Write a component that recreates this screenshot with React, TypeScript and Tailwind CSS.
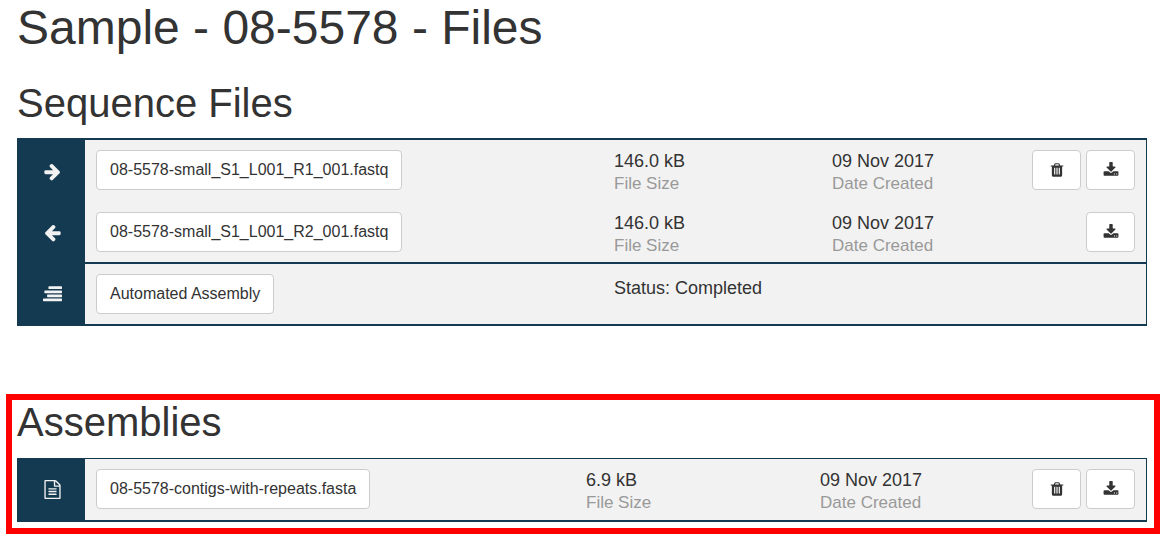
import type { ReactNode } from "react";

const icons = {
  forward:
    "M1600 960q0 54-37 91l-651 651q-39 37-91 37-51 0-90-37l-75-75q-38-38-38-91t38-91l293-293h-704q-52 0-84.5-37.5t-32.5-90.5v-128q0-53 32.5-90.5t84.5-37.5h704l-293-294q-38-36-38-90t38-90l75-75q38-38 90-38 53 0 91 38l651 651q37 35 37 90z",
  reverse:
    "M1664 896v128q0 53-32.5 90.5t-84.5 37.5h-704l293 294q38 36 38 90t-38 90l-75 76q-37 37-90 37-52 0-91-37l-651-652q-37-37-37-90 0-52 37-91l651-650q38-38 91-38 52 0 90 38l75 74q38 38 38 91t-38 91l-293 293h704q52 0 84.5 37.5t32.5 90.5z",
  lines:
    "M1792 1344v128q0 26-19 45t-45 19h-1664q-26 0-45-19t-19-45v-128q0-26 19-45t45-19h1664q26 0 45 19t19 45zm0-384v128q0 26-19 45t-45 19h-1280q-26 0-45-19t-19-45v-128q0-26 19-45t45-19h1280q26 0 45 19t19 45zm0-384v128q0 26-19 45t-45 19h-1536q-26 0-45-19t-19-45v-128q0-26 19-45t45-19h1536q26 0 45 19t19 45zm0-384v128q0 26-19 45t-45 19h-1152q-26 0-45-19t-19-45v-128q0-26 19-45t45-19h1152q26 0 45 19t19 45z",
  document:
    "M1596 380q28 28 48 76t20 88v1152q0 40-28 68t-68 28h-1344q-40 0-68-28t-28-68v-1600q0-40 28-68t68-28h896q40 0 88 20t76 48zm-444-244v376h376q-10-29-22-41l-313-313q-12-12-41-22zm384 1528v-1024h-416q-40 0-68-28t-28-68v-416h-768v1536h1280zm-1024-864q0-14 9-23t23-9h704q14 0 23 9t9 23v64q0 14-9 23t-23 9h-704q-14 0-23-9t-9-23v-64zm736 224q14 0 23 9t9 23v64q0 14-9 23t-23 9h-704q-14 0-23-9t-9-23v-64q0-14 9-23t23-9h704zm0 256q14 0 23 9t9 23v64q0 14-9 23t-23 9h-704q-14 0-23-9t-9-23v-64q0-14 9-23t23-9h704z",
  trash:
    "M704 1376v-704q0-14-9-23t-23-9h-64q-14 0-23 9t-9 23v704q0 14 9 23t23 9h64q14 0 23-9t9-23zm256 0v-704q0-14-9-23t-23-9h-64q-14 0-23 9t-9 23v704q0 14 9 23t23 9h64q14 0 23-9t9-23zm256 0v-704q0-14-9-23t-23-9h-64q-14 0-23 9t-9 23v704q0 14 9 23t23 9h64q14 0 23-9t9-23zm-544-992h448l-48-117q-7-9-17-11h-317q-10 2-17 11zm928 32v64q0 14-9 23t-23 9h-96v948q0 83-47 143.5t-113 60.5h-832q-66 0-113-58.5t-47-141.5v-952h-96q-14 0-23-9t-9-23v-64q0-14 9-23t23-9h309l70-167q15-37 54-63t79-26h320q40 0 79 26t54 63l70 167h309q14 0 23 9t9 23z",
  download:
    "M1344 1344q0-26-19-45t-45-19-45 19-19 45 19 45 45 19 45-19 19-45zm256 0q0-26-19-45t-45-19-45 19-19 45 19 45 45 19 45-19 19-45zm128-224v320q0 40-28 68t-68 28h-1472q-40 0-68-28t-28-68v-320q0-40 28-68t68-28h465l135 136q58 56 136 56t136-56l136-136h464q40 0 68 28t28 68zm-325-569q17 41-14 70l-448 448q-18 19-45 19t-45-19l-448-448q-31-29-14-70 17-39 59-39h256v-448q0-26 19-45t45-19h256q26 0 45 19t19 45v448h256q42 0 59 39z",
};

type IconName = keyof typeof icons;

function Icon({ name, className }: { name: IconName; className: string }) {
  return (
    <svg viewBox="0 0 1792 1792" fill="currentColor" aria-hidden="true" className={className}>
      <path d={icons[name]} />
    </svg>
  );
}

function Button({ children, label, square }: { children: ReactNode; label?: string; square?: boolean }) {
  return (
    <button
      type="button"
      aria-label={label}
      className={
        "inline-flex h-10 items-center justify-center rounded border border-[#cccccc] bg-white text-base text-[#333333] hover:bg-gray-100 " +
        (square ? "w-[49px]" : "px-[13px] whitespace-nowrap")
      }
    >
      {children}
    </button>
  );
}

function Detail({ value, label }: { value: string; label: string }) {
  return (
    <div className="whitespace-nowrap">
      <div className="text-lg leading-[22px] text-[#333333]">{value}</div>
      <div className="text-[17px] leading-6 text-[#999999]">{label}</div>
    </div>
  );
}

function Side({ icon }: { icon: IconName }) {
  return (
    <td className="bg-[#143a52] pl-[3px] align-middle text-[#f2f2f2]">
      <Icon name={icon} className="mx-auto size-[19px]" />
    </td>
  );
}

interface FileRow {
  icon: IconName;
  name: string;
  size: string;
  date: string;
  removable: boolean;
  height: string;
}

function FileTableRow({ row }: { row: FileRow }) {
  return (
    <tr className={row.height}>
      <Side icon={row.icon} />
      <td className="pt-[10px] pl-[11px] align-top">
        <Button>{row.name}</Button>
      </td>
      <td className="pt-[10px] pl-[11px] align-top">
        <Detail value={row.size} label="File Size" />
      </td>
      <td className="pt-[10px] pl-[11px] align-top">
        <Detail value={row.date} label="Date Created" />
      </td>
      <td className="pt-[10px] pr-[11px] align-top">
        <div className="flex justify-end gap-[5px]">
          {row.removable && (
            <Button square label={"Delete " + row.name}>
              <Icon name="trash" className="size-4" />
            </Button>
          )}
          <Button square label={"Download " + row.name}>
            <Icon name="download" className="size-4" />
          </Button>
        </div>
      </td>
    </tr>
  );
}

const sequenceFiles: FileRow[] = [
  { icon: "forward", name: "08-5578-small_S1_L001_R1_001.fastq", size: "146.0 kB", date: "09 Nov 2017", removable: true, height: "h-[62px]" },
  { icon: "reverse", name: "08-5578-small_S1_L001_R2_001.fastq", size: "146.0 kB", date: "09 Nov 2017", removable: false, height: "h-[60px]" },
];

const assembly: FileRow = {
  icon: "document",
  name: "08-5578-contigs-with-repeats.fasta",
  size: "6.9 kB",
  date: "09 Nov 2017",
  removable: true,
  height: "h-[61px]",
};

export default function App() {
  return (
    <main className="bg-white font-['Liberation_Sans',Arial,sans-serif] text-[#333333]">
      <div className="pr-5 pl-[17px]">
        <h1 className="text-5xl leading-[56px]">Sample - 08-5578 - Files</h1>
        <h2 className="mt-[25px] text-[40px] leading-[44px]">Sequence Files</h2>
        <div className="mt-[13px] border-y-2 border-r border-[#143a52] bg-[#f2f2f2]">
          <table className="w-full table-fixed border-collapse">
            <colgroup>
              <col className="w-[68px]" />
              <col />
              <col className="w-[218px]" />
              <col className="w-[200px]" />
              <col className="w-[125px]" />
            </colgroup>
            <tbody>
              {sequenceFiles.map((row) => (
                <FileTableRow key={row.name} row={row} />
              ))}
              <tr className="h-[2px] bg-[#143a52]" aria-hidden="true">
                <td colSpan={5} />
              </tr>
              <tr className="h-[60px]">
                <Side icon="lines" />
                <td className="pt-[10px] pl-[11px] align-top">
                  <Button>Automated Assembly</Button>
                </td>
                <td colSpan={3} className="pt-3 pl-[11px] align-top text-lg leading-6">
                  Status: Completed
                </td>
              </tr>
            </tbody>
          </table>
        </div>
      </div>
      <section className="mt-[68px] mr-[7px] ml-[6px] border-6 border-[#ff0000] pr-[7px] pb-[6px] pl-[5px]">
        <h2 className="text-[40px] leading-[44px]">Assemblies</h2>
        <div className="mt-[14px] border-t border-r border-b-2 border-[#143a52] bg-[#f2f2f2]">
          <table className="w-full table-fixed border-collapse">
            <colgroup>
              <col className="w-[68px]" />
              <col />
              <col className="w-[234px]" />
              <col className="w-[212px]" />
              <col className="w-[125px]" />
            </colgroup>
            <tbody>
              <FileTableRow row={assembly} />
            </tbody>
          </table>
        </div>
      </section>
    </main>
  );
}
